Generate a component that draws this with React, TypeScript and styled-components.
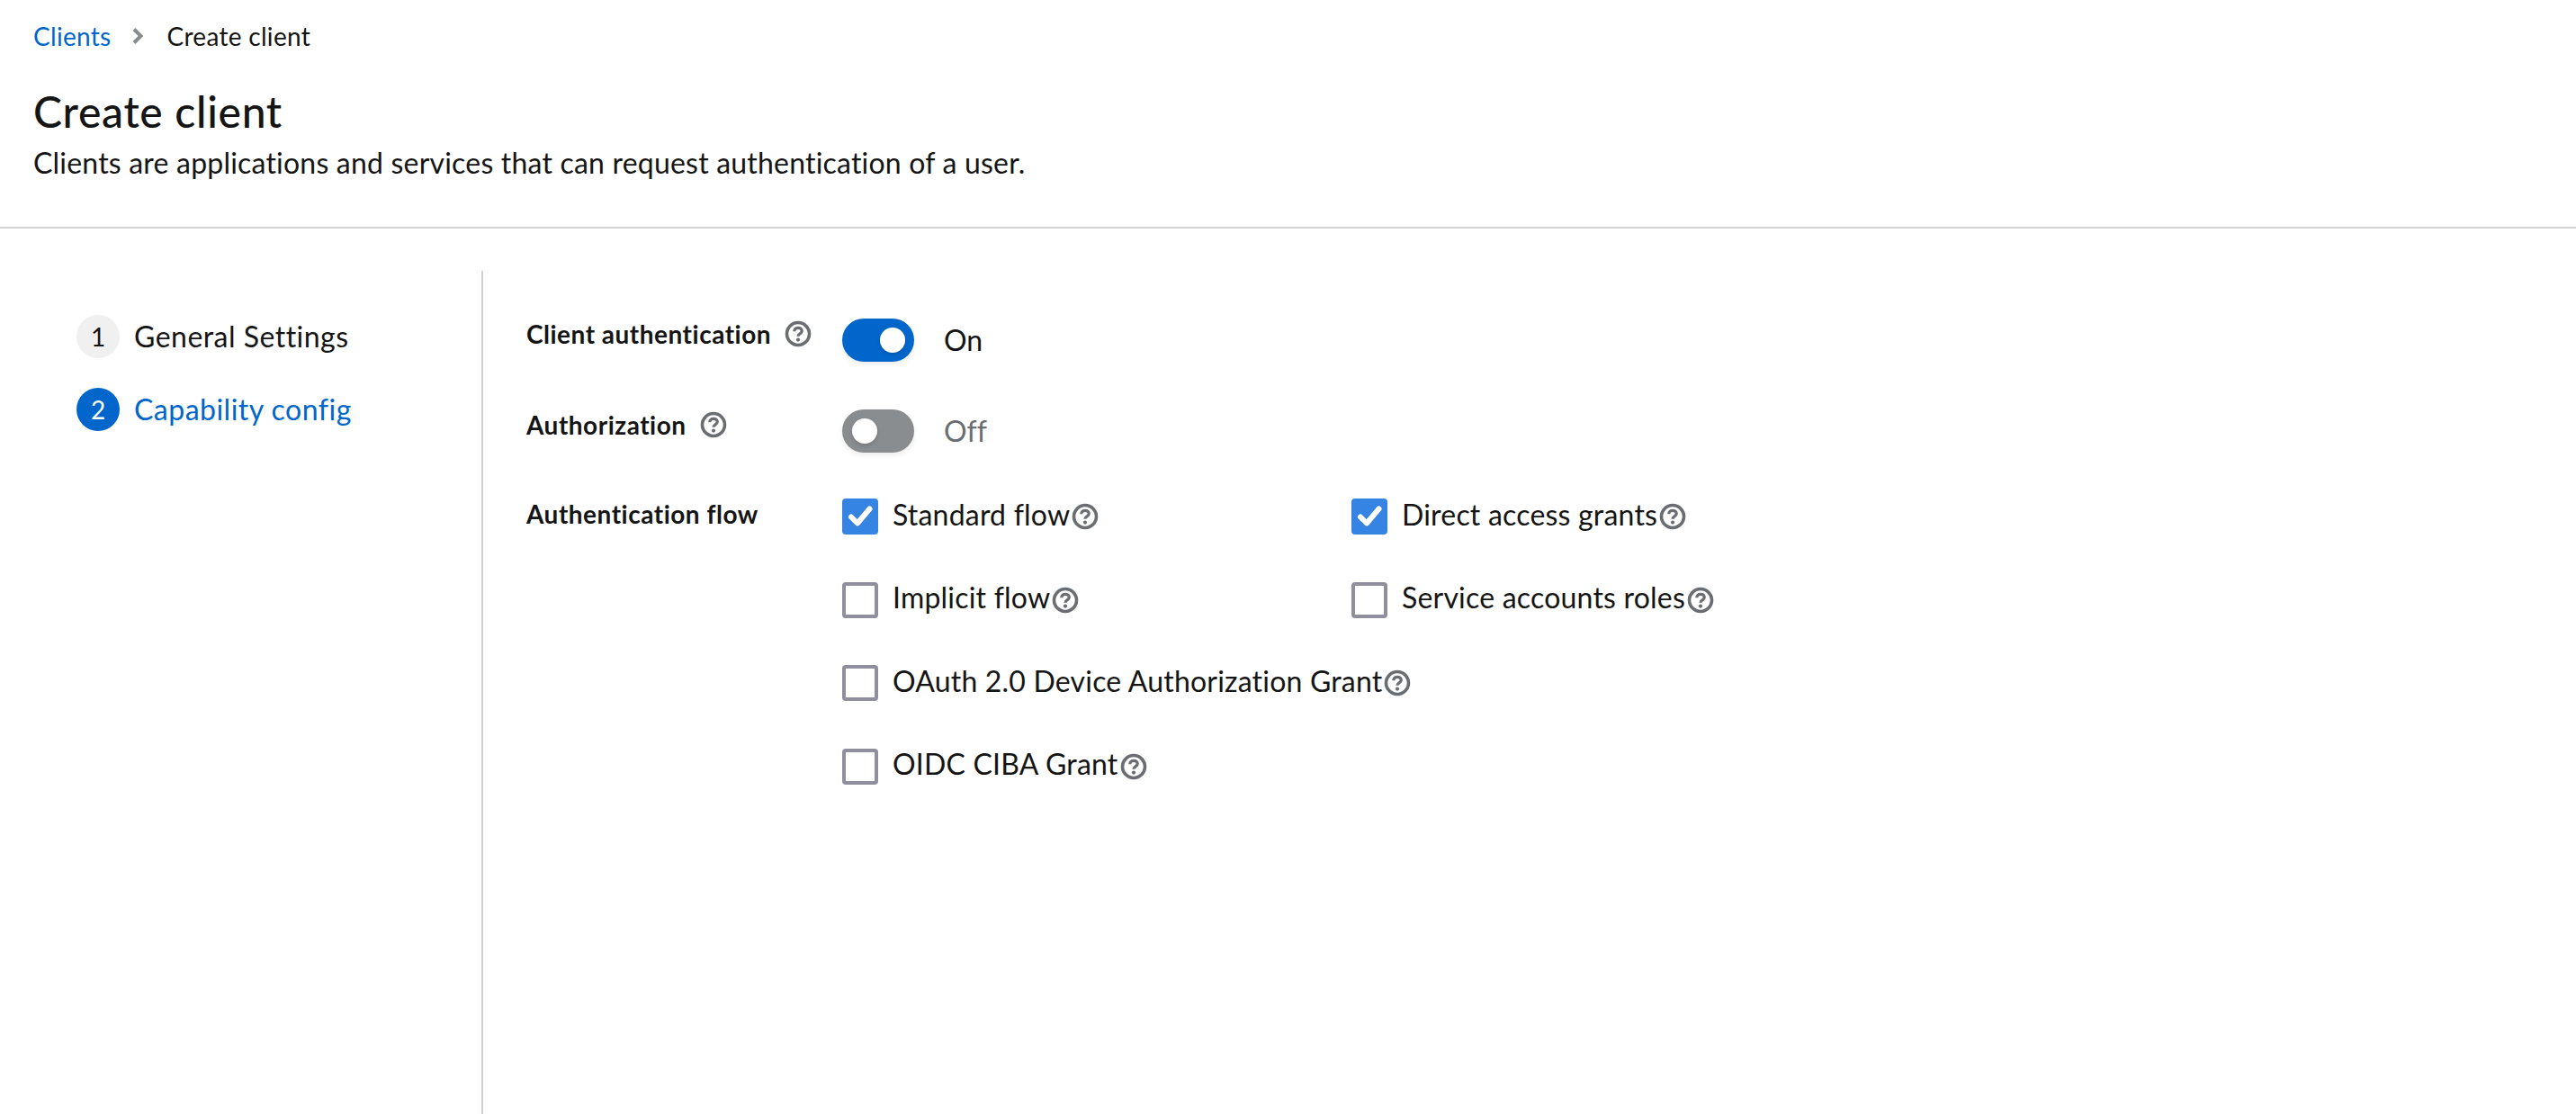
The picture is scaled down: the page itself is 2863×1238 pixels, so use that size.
import styled, { createGlobalStyle } from 'styled-components';

const GlobalStyle = createGlobalStyle`
  html, body {
    margin: 0;
    padding: 0;
    background: #fff;
    color: #151515;
    font-family: Lato, "Open Sans", sans-serif;
    font-variant-ligatures: none;
  }
`;

const flows = [
  [
    { label: 'Standard flow', checked: true },
    { label: 'Direct access grants', checked: true },
  ],
  [
    { label: 'Implicit flow', checked: false },
    { label: 'Service accounts roles', checked: false },
  ],
  [{ label: 'OAuth 2.0 Device Authorization Grant', checked: false }],
  [{ label: 'OIDC CIBA Grant', checked: false }],
];

function HelpIcon() {
  return (
    <HelpWrapper>
      <svg width="30" height="30" viewBox="0 0 30 30">
        <circle cx="15" cy="15" r="12.5" fill="none" stroke="currentColor" strokeWidth="3.6" />
        <path
          d="M10.8 12.2c0-2.5 1.9-3.9 4.3-3.9s4.2 1.4 4.2 3.5c0 3.1-4.3 3-4.3 5.9"
          fill="none"
          stroke="currentColor"
          strokeWidth="3.2"
        />
        <circle cx="15" cy="21.6" r="2.1" fill="currentColor" />
      </svg>
    </HelpWrapper>
  );
}

function Switch({ on }: { on: boolean }) {
  return (
    <SwitchWrapper>
      <SwitchTrack $on={on}>
        <SwitchKnob />
      </SwitchTrack>
      <SwitchLabel $on={on}>{on ? 'On' : 'Off'}</SwitchLabel>
    </SwitchWrapper>
  );
}

function FlowCheck({ label, checked }: { label: string; checked: boolean }) {
  return (
    <CheckWrapper>
      <CheckBox $checked={checked}>
        {checked && (
          <svg width="32" height="32" viewBox="0 0 32 32">
            <path d="M6 16.5l7 7L26.5 7.5" fill="none" stroke="#fff" strokeWidth="6" strokeLinecap="round" strokeLinejoin="round" />
          </svg>
        )}
      </CheckBox>
      <CheckLabel>{label}</CheckLabel>
      <HelpIcon />
    </CheckWrapper>
  );
}

export default function App() {
  return (
    <>
      <GlobalStyle />
      <Page>
        <Header>
          <Breadcrumb>
            <CrumbLink>Clients</CrumbLink>
            <CrumbArrow>
              <svg width="14" height="20" viewBox="0 0 14 20">
                <path d="M3 2.5l7.5 7.5L3 17.5" fill="none" stroke="#8a8d90" strokeWidth="4" />
              </svg>
            </CrumbArrow>
            <span>Create client</span>
          </Breadcrumb>
          <Title>Create client</Title>
          <Description>Clients are applications and services that can request authentication of a user.</Description>
        </Header>
        <Wizard>
          <StepNav>
            <Step>
              <StepNumber $active={false}>1</StepNumber>
              <StepName $active={false}>General Settings</StepName>
            </Step>
            <Step>
              <StepNumber $active>2</StepNumber>
              <StepName $active>Capability config</StepName>
            </Step>
          </StepNav>
          <Form>
            <SwitchRow>
              <FieldLabel>
                Client authentication
                <HelpIcon />
              </FieldLabel>
              <Switch on />
            </SwitchRow>
            <SwitchRow>
              <FieldLabel>
                Authorization
                <HelpIcon />
              </FieldLabel>
              <Switch on={false} />
            </SwitchRow>
            <FlowRow>
              <FieldLabel>Authentication flow</FieldLabel>
              <FlowList>
                {flows.map((row) => (
                  <FlowLine key={row[0].label}>
                    {row.map((item) => (
                      <FlowCheck key={item.label} label={item.label} checked={item.checked} />
                    ))}
                  </FlowLine>
                ))}
              </FlowList>
            </FlowRow>
          </Form>
        </Wizard>
      </Page>
    </>
  );
}

const Page = styled.div`
  height: 1238px;
  display: flex;
  flex-direction: column;
  overflow: hidden;
`;

const Header = styled.header`
  padding: 24px 37px 47px;
  border-bottom: 2px solid #d2d2d2;
`;

const Breadcrumb = styled.nav`
  display: flex;
  align-items: center;
  height: 32px;
  font-size: 28px;
  letter-spacing: 0.3px;
`;

const CrumbLink = styled.span`
  color: #06c;
`;

const CrumbArrow = styled.span`
  display: flex;
  margin: 0 26px 0 22px;
`;

const Title = styled.h1`
  margin: 38px 0 0;
  font-size: 48px;
  font-weight: 500;
  line-height: 60px;
  letter-spacing: 0.7px;
`;

const Description = styled.p`
  margin: 3px 0 0;
  font-size: 32px;
  line-height: 48px;
  letter-spacing: 0.2px;
`;

const Wizard = styled.main`
  flex: 1;
  display: flex;
  padding-top: 47px;
  min-height: 0;
`;

const StepNav = styled.nav`
  width: 450px;
  padding: 49px 0 0 85px;
  border-right: 2px solid #d2d2d2;
  display: flex;
  flex-direction: column;
  gap: 33px;
`;

const Step = styled.div`
  display: flex;
  align-items: center;
  gap: 16px;
  height: 48px;
`;

const StepNumber = styled.span<{ $active: boolean }>`
  width: 48px;
  height: 48px;
  flex: none;
  border-radius: 50%;
  display: flex;
  align-items: center;
  justify-content: center;
  font-size: 28px;
  font-weight: 400;
  background: ${(p) => (p.$active ? '#06c' : '#f0f0f0')};
  color: ${(p) => (p.$active ? '#fff' : '#151515')};
`;

const StepName = styled.span<{ $active: boolean }>`
  font-size: 32px;
  letter-spacing: 0.48px;
  margin-top: -2px;
  color: ${(p) => (p.$active ? '#06c' : '#151515')};
`;

const Form = styled.section`
  padding: 53px 0 0 48px;
  display: flex;
  flex-direction: column;
  gap: 53px;
`;

const SwitchRow = styled.div`
  display: grid;
  grid-template-columns: 351px auto;
  height: 48px;
`;

const FlowRow = styled.div`
  display: grid;
  grid-template-columns: 351px auto;
  margin-top: -2px;
`;

const FieldLabel = styled.label`
  display: flex;
  align-items: center;
  gap: 15px;
  height: 34px;
  font-size: 28px;
  font-weight: 700;
  letter-spacing: 0.5px;
`;

const HelpWrapper = styled.span`
  display: inline-flex;
  flex: none;
  color: #6a6e73;
`;

const SwitchWrapper = styled.div`
  display: flex;
  align-items: center;
  gap: 33px;
`;

const SwitchTrack = styled.span<{ $on: boolean }>`
  width: 80px;
  height: 48px;
  padding: 0 ${(p) => (p.$on ? '10px' : '11px')};
  box-sizing: border-box;
  border-radius: 24px;
  display: flex;
  align-items: center;
  justify-content: ${(p) => (p.$on ? 'flex-end' : 'flex-start')};
  background: ${(p) => (p.$on ? '#06c' : '#8a8d90')};
  box-shadow: 0 3px 6px rgba(3, 3, 3, 0.08);
`;

const SwitchKnob = styled.span`
  width: 28px;
  height: 28px;
  border-radius: 50%;
  background: #fff;
  box-shadow: 0 2px 4px rgba(3, 3, 3, 0.16);
`;

const SwitchLabel = styled.span<{ $on: boolean }>`
  font-size: 32px;
  margin-top: -2px;
  color: ${(p) => (p.$on ? '#151515' : '#6a6e73')};
`;

const FlowList = styled.div`
  display: flex;
  flex-direction: column;
  gap: 52.5px;
`;

const FlowLine = styled.div`
  display: flex;
  height: 40px;
`;

const CheckWrapper = styled.div`
  width: 566px;
  flex: none;
  display: flex;
  align-items: center;
`;

const CheckBox = styled.span<{ $checked: boolean }>`
  width: 40px;
  height: 40px;
  flex: none;
  box-sizing: border-box;
  border-radius: 4px;
  display: flex;
  align-items: center;
  justify-content: center;
  background: ${(p) => (p.$checked ? '#3584e4' : '#fff')};
  border: ${(p) => (p.$checked ? 'none' : '4px solid #8f8f9d')};
`;

const CheckLabel = styled.span`
  margin: -6px 2px 0 16px;
  font-size: 32px;
  letter-spacing: 0.2px;
  white-space: nowrap;
`;
